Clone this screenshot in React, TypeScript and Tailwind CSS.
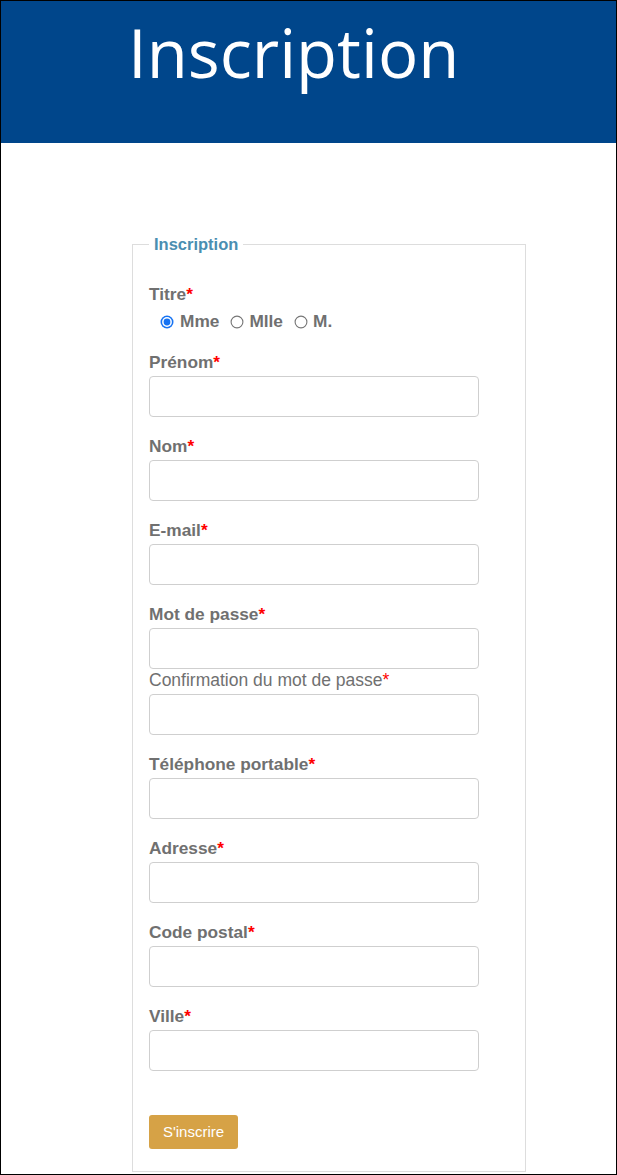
import React from "react";

const Req = () => <span className="text-[#ff0000]">*</span>;

function Field({ label, bold = true, first = false, tight = false }: { label: string; bold?: boolean; first?: boolean; tight?: boolean }) {
  return (
    <div className={first ? "" : tight ? "mt-[1px]" : "mt-[19px]"}>
      <div className={`leading-[20px] text-[#707070] ${bold ? "font-bold text-[17.3px]" : "font-normal text-[17.5px]"}`}>
        {label}
        <Req />
      </div>
      <div className="mt-[4px] h-[41px] w-[330px] rounded-[4px] border border-[#cfcfcf] bg-white" />
    </div>
  );
}

function Radio({ checked }: { checked?: boolean }) {
  return checked ? (
    <svg width="14" height="14" viewBox="0 0 14 14" className="shrink-0">
      <circle cx="7" cy="7" r="6.5" fill="#1773f2" />
      <circle cx="7" cy="7" r="4.9" fill="#ffffff" />
      <circle cx="7" cy="7" r="3.4" fill="#1773f2" />
    </svg>
  ) : (
    <svg width="14" height="14" viewBox="0 0 14 14" className="shrink-0">
      <circle cx="7" cy="7" r="5.9" fill="#ffffff" stroke="#767676" strokeWidth="1.1" />
    </svg>
  );
}

export default function App() {
  return (
    <div
      className="w-[617px] h-[1175px] overflow-hidden border border-black bg-white"
      style={{ fontFamily: "'Liberation Sans', Arial, sans-serif" }}
    >
      <div className="h-[142px] bg-[#00468b] pl-[127px] pt-[18px]">
        <div
          className="text-[67px] leading-none text-white"
          style={{ fontFamily: "'Open Sans', 'Noto Sans', sans-serif" }}
        >
          Inscription
        </div>
      </div>

      <fieldset className="ml-[131px] mt-[91px] w-[394px] h-[938px] border border-[#dddddd] pl-[16px] pt-[30px]">
        <legend className="ml-0 px-[5px] text-[16.5px] leading-[20px] font-bold text-[#4a8eb1]">
          Inscription
        </legend>

        <div className="text-[17.3px] leading-[20px] font-bold text-[#707070]">
          Titre
          <Req />
        </div>
        <div className="mt-[8px] ml-[11px] flex items-center h-[20px] text-[17.3px] font-bold text-[#707070]">
          <Radio checked />
          <span className="ml-[6px]">Mme</span>
          <span className="ml-[11px]"><Radio /></span>
          <span className="ml-[5px]">Mlle</span>
          <span className="ml-[11px]"><Radio /></span>
          <span className="ml-[5px]">M.</span>
        </div>

        <div className="mt-[20px]">
          <Field label="Prénom" first />
          <Field label="Nom" />
          <Field label="E-mail" />
          <Field label="Mot de passe" />
          <Field label="Confirmation du mot de passe" bold={false} tight />
          <Field label="Téléphone portable" />
          <Field label="Adresse" />
          <Field label="Code postal" />
          <Field label="Ville" />
        </div>

        <button className="mt-[44px] h-[34px] w-[89px] rounded-[3px] bg-[#d6a246] text-[15px] text-white">
          S'inscrire
        </button>
      </fieldset>
    </div>
  );
}
